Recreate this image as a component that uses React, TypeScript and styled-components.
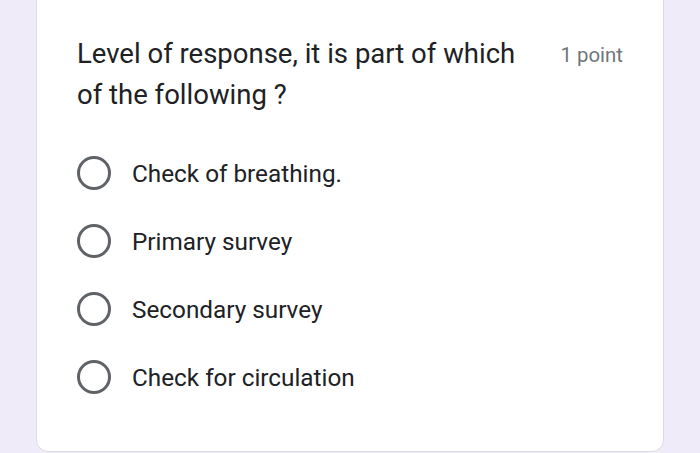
import styled, { createGlobalStyle } from "styled-components";

const GlobalStyle = createGlobalStyle`
  html, body {
    margin: 0;
    padding: 0;
    background: #efebf8;
  }
  body {
    font-family: Roboto, "Noto Sans", Arial, sans-serif;
  }
`;

const options = [
  "Check of breathing.",
  "Primary survey",
  "Secondary survey",
  "Check for circulation",
];

function App() {
  return (
    <>
      <GlobalStyle />
      <Page>
        <Card>
          <Header>
            <Question>Level of response, it is part of which of the following ?</Question>
            <Points>1 point</Points>
          </Header>
          <Options>
            {options.map((o) => (
              <Option key={o}>
                <Radio />
                <Label>{o}</Label>
              </Option>
            ))}
          </Options>
        </Card>
      </Page>
    </>
  );
}

export default App;

const Page = styled.div`
  width: 700px;
  height: 453px;
  overflow: hidden;
  padding: 0 36px;
  box-sizing: border-box;
`;

const Card = styled.div`
  margin-top: -20px;
  height: 472px;
  box-sizing: border-box;
  background: #ffffff;
  border: 1px solid #dadce0;
  border-radius: 12px;
  padding: 52px 40px 0 40px;
`;

const Header = styled.div`
  display: flex;
  align-items: flex-start;
  justify-content: space-between;
`;

const Question = styled.div`
  width: 460px;
  font-size: 27.5px;
  line-height: 41px;
  color: #202124;
`;

const Points = styled.div`
  padding-top: 10px;
  font-size: 20.4px;
  color: #70757a;
`;

const Options = styled.div`
  display: flex;
  flex-direction: column;
  gap: 34px;
  margin-top: 41px;
`;

const Option = styled.div`
  display: flex;
  align-items: center;
  height: 34px;
`;

const Radio = styled.div`
  width: 28px;
  height: 28px;
  border: 3px solid #5f6368;
  border-radius: 50%;
  margin-right: 21px;
  flex-shrink: 0;
`;

const Label = styled.div`
  font-size: 24.3px;
  color: #202124;
`;
